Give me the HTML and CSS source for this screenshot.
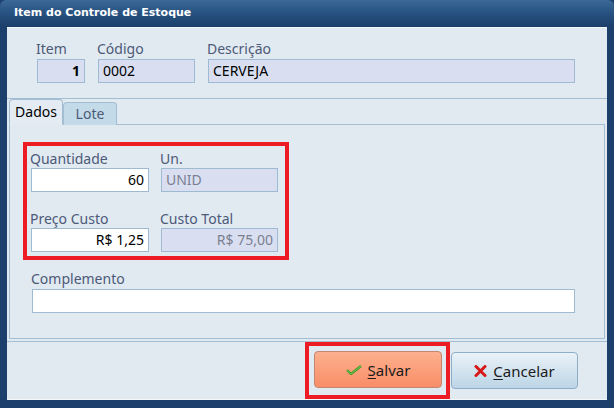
FILE: index.html
```html
<!DOCTYPE html>
<html>
<head>
    <meta charset="utf-8">
    <title>Item do Controle de Estoque</title>
    <link rel="stylesheet" href="styles.css">
</head>
<body>
    <div class="window">
        <div class="titlebar">Item do Controle de Estoque</div>
        <div class="client">
            <div class="header-panel">
                <div class="field item-field">
                    <label>Item</label>
                    <div class="box readonly bold right">1</div>
                </div>
                <div class="field code-field">
                    <label>Código</label>
                    <div class="box readonly">0002</div>
                </div>
                <div class="field desc-field">
                    <label>Descrição</label>
                    <div class="box readonly">CERVEJA</div>
                </div>
            </div>
            <div class="tabs">
                <div class="tab active">Dados</div>
                <div class="tab">Lote</div>
            </div>
            <div class="tab-page">
                <div class="highlight">
                    <div class="grid">
                        <div class="field">
                            <label>Quantidade</label>
                            <div class="box right">60</div>
                        </div>
                        <div class="field">
                            <label>Un.</label>
                            <div class="box disabled">UNID</div>
                        </div>
                        <div class="field">
                            <label>Preço Custo</label>
                            <div class="box right">R$ 1,25</div>
                        </div>
                        <div class="field">
                            <label>Custo Total</label>
                            <div class="box disabled right">R$ 75,00</div>
                        </div>
                    </div>
                </div>
                <div class="field complement">
                    <label>Complemento</label>
                    <div class="box"></div>
                </div>
            </div>
            <div class="footer">
                <div class="highlight save-wrap">
                    <button class="btn save">
                        <svg width="16" height="10" viewBox="0 0 16 10">
                            <path d="M1 5 L5 9 L15 1" fill="none" stroke="#3c9a28" stroke-width="2.4"/>
                            <path d="M1 5 L5 9 L15 1" fill="none" stroke="#7fd05a" stroke-width="0.8"/>
                        </svg>
                        <span><u>S</u>alvar</span>
                    </button>
                </div>
                <button class="btn cancel">
                    <svg width="13" height="12" viewBox="0 0 13 12">
                        <path d="M2 1.5 L11 10.5 M11 1.5 L2 10.5" stroke="#d81818" stroke-width="3" stroke-linecap="round"/>
                    </svg>
                    <span><u>C</u>ancelar</span>
                </button>
            </div>
        </div>
    </div>
</body>
</html>
```

FILE: styles.css
```css
* {
    box-sizing: border-box;
    margin: 0;
    padding: 0;
}
body {
    width: 614px;
    height: 408px;
    overflow: hidden;
    font-family: "Noto Sans", "Open Sans", sans-serif;
    font-size: 13px;
}
.window {
    width: 614px;
    height: 408px;
    background: #1c3f6b;
    padding: 0 7px 8px 7px;
    display: flex;
    flex-direction: column;
}
.titlebar {
    height: 28px;
    margin: 0 -7px;
    padding: 6px 0 0 14px;
    color: white;
    font-family: "DejaVu Sans", sans-serif;
    font-weight: bold;
    font-size: 11px;
    background: linear-gradient(#3b6a98, #2a5584 40%, #1c3f6b);
    border-radius: 6px 6px 0 0;
}
.client {
    flex: 1;
    background: #e1e9f1;
    display: flex;
    flex-direction: column;
    border-top: 1px solid #f4f7fa;
}
.header-panel {
    height: 71px;
    display: flex;
    gap: 13px;
    padding: 12px 0 0 30px;
    border-bottom: 1px solid #a3bdd3;
}
.field {
    display: flex;
    flex-direction: column;
}
.field label {
    color: #4c5a78;
    font-size: 14px;
    line-height: 17px;
    height: 19px;
    margin-left: -1px;
}
.grid .field label {
    height: 18px;
}
.item-field { width: 48px; }
.code-field { width: 97px; }
.desc-field { width: 367px; }
.box {
    height: 24px;
    border: 1px solid #9fbad3;
    background: white;
    color: black;
    font-size: 14px;
    line-height: 21px;
    padding: 0 4px;
    white-space: nowrap;
}
.box.readonly {
    background: #d9dff1;
}
.box.disabled {
    background: #d9dff1;
    color: #7a8090;
}
.box.right {
    text-align: right;
}
.box.bold {
    font-weight: bold;
}
.tabs {
    display: flex;
    align-items: flex-end;
    height: 26px;
    padding-left: 2px;
    margin-bottom: -1px;
    position: relative;
    z-index: 1;
}
.tab {
    height: 23px;
    width: 54px;
    border: 1px solid #a3bdd3;
    border-bottom: none;
    border-radius: 4px 4px 0 0;
    background: #c3dae9;
    color: #4c5a78;
    font-size: 14px;
    text-align: center;
    line-height: 21px;
}
.tab.active {
    height: 26px;
    width: 54px;
    background: #e4ebf2;
    color: black;
    line-height: 24px;
    border-bottom: 1px solid #e4ebf2;
}
.tab-page {
    margin: 0 2px;
    height: 215px;
    border: 1px solid #a3bdd3;
    background: #e1e9f1;
    padding: 17px 0 0 13px;
}
.highlight {
    border: 4px solid #ed1c24;
}
.tab-page .highlight {
    width: 266px;
    padding: 4px 0 4px 4px;
}
.grid {
    display: grid;
    grid-template-columns: 118px 117px;
    column-gap: 12px;
    row-gap: 18px;
}
.complement {
    margin: 10px 0 0 9px;
    width: 543px;
}
.footer {
    flex: 1;
    margin-top: 2px;
    border-top: 1px solid #a3bdd3;
    border-bottom: 1px solid #f4f7fa;
    display: flex;
    justify-content: flex-end;
    padding: 0 29px 0 0;
    align-items: flex-start;
}
.save-wrap {
    width: 145px;
    height: 57px;
    padding: 5px 0 0 5px;
    margin-right: 1px;
}
.btn {
    width: 128px;
    height: 37px;
    border-radius: 4px;
    font-family: "Noto Sans", "Open Sans", sans-serif;
    font-size: 15px;
    color: #1a1a1a;
    display: flex;
    align-items: center;
    justify-content: center;
    gap: 6px;
}
.save {
    background: linear-gradient(#fdb08e, #f88e68);
    border: 1px solid #c48670;
}
.cancel {
    margin-top: 10px;
    width: 127px;
    background: linear-gradient(#eaf2f8, #bcd5e6);
    border: 1px solid #8eaec8;
}
.btn u {
    text-underline-offset: 2px;
}
```
